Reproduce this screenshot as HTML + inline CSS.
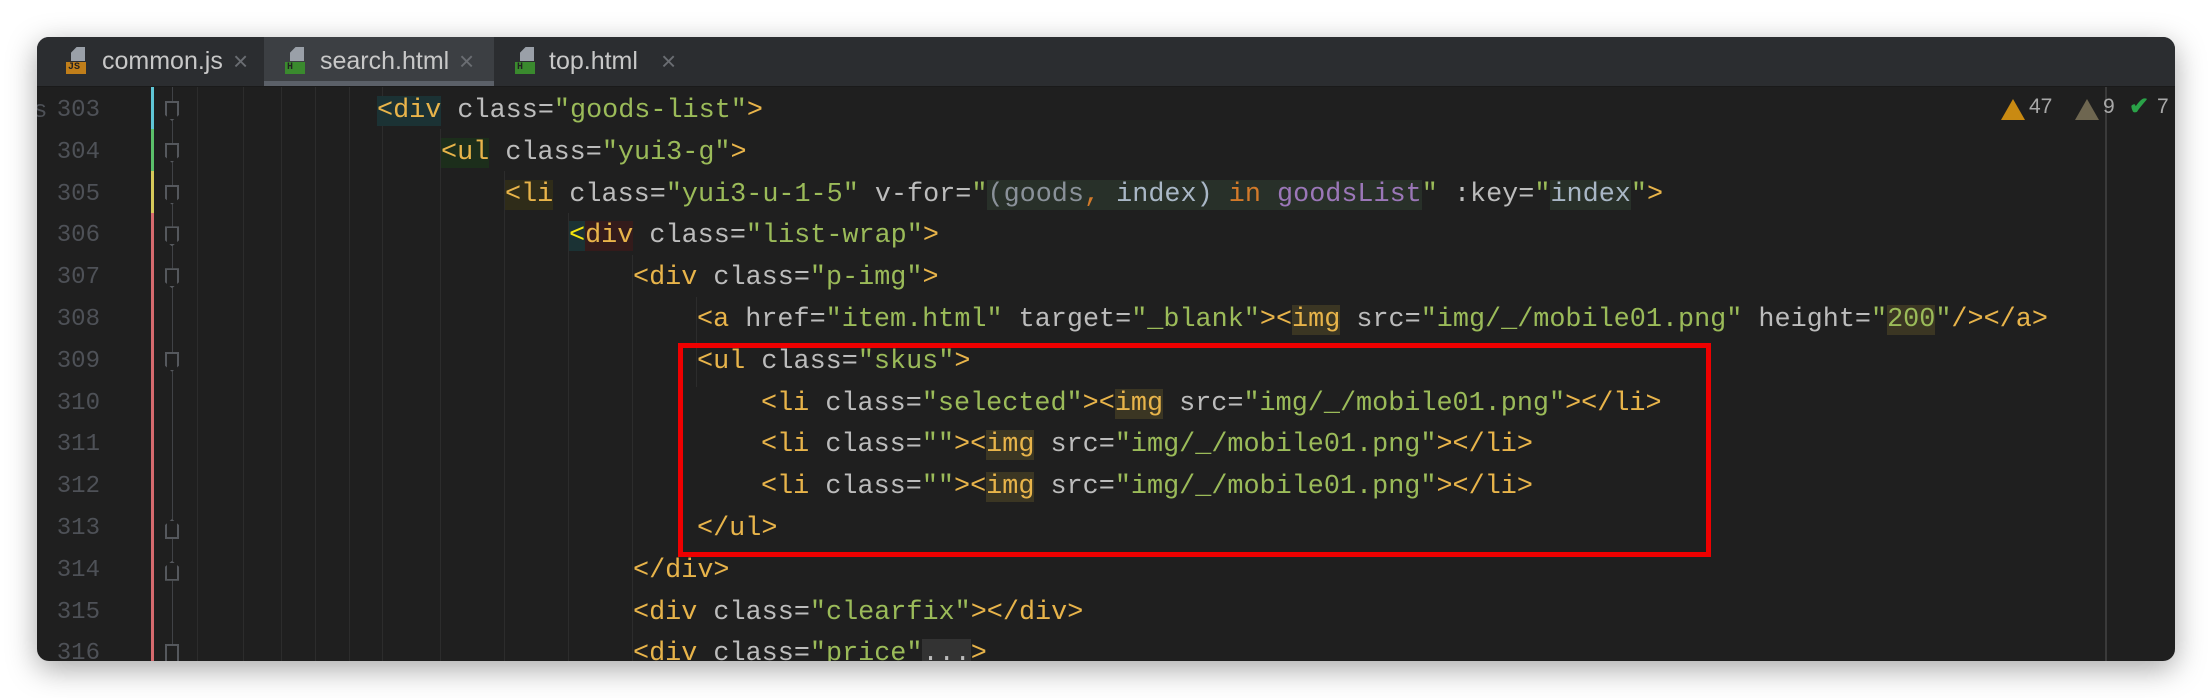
<!DOCTYPE html>
<html><head><meta charset="utf-8"><style>
body{margin:0;width:2212px;height:698px;background:#fff;overflow:hidden;position:relative;font-family:"Liberation Sans",sans-serif}
.win{position:absolute;left:37px;top:37px;width:2138px;height:624px;background:#1f1f1f;border-radius:12px;overflow:hidden;box-shadow:0 8px 30px rgba(0,0,0,.35)}
.tabs{position:absolute;left:0;top:0;right:0;height:49px;background:#2b2d30;border-bottom:1px solid #1a1a1a}
.tab{position:absolute;top:0;height:49px;color:#c8c8c8;font-size:25px;line-height:49px}
.tab.act{background:#3c3f43}
.tab.act:after{content:"";position:absolute;left:0;right:0;bottom:0;height:5px;background:#5b6068}
.ic{position:absolute;top:10px;width:20px;height:28px}
.ic .pg{position:absolute;left:5px;top:0;width:14px;height:14px;background:#9aa0a8;clip-path:polygon(40% 0,100% 0,100% 100%,0 100%,0 40%)}
.ic .bd{position:absolute;left:0;top:15px;width:20px;height:12px;font:bold 10px "Liberation Mono",monospace;color:#222;line-height:12px;padding-left:2px;box-sizing:border-box}
.x{position:absolute;top:0;color:#6a6d72;font-size:26px}
.line{position:absolute;left:0;height:42px;line-height:42px;font-family:"Liberation Mono",monospace;font-size:26.8px;white-space:pre;color:#bcbcbc}
.num{position:absolute;left:0;width:63px;text-align:right;height:42px;line-height:42px;font-family:"Liberation Mono",monospace;font-size:24px;color:#4e5157}
.t{color:#e8b44a}.s{color:#9bbb59}.a{color:#bcbcbc}.o{color:#d27a2a}.p{color:#9b77b8}.g{color:#8a9199}.v{color:#a9b7c6}
.guide{position:absolute;width:1px;background:#2c2c2c}
.fd{position:absolute;left:128px;width:14px;height:20px;border:2px solid #55585d;box-sizing:border-box;background:#1f1f1f}
</style></head><body>
<div class="win">
<div class="tabs">
 <div class="tab" style="left:0;width:226px">
  <div class="ic" style="left:29px"><div class="pg"></div><div class="bd" style="background:#c07e1a">JS</div></div>
  <span style="position:absolute;left:65px">common.js</span><span class="x" style="left:196px">×</span></div>
 <div class="tab act" style="left:227px;width:230px">
  <div class="ic" style="left:21px"><div class="pg"></div><div class="bd" style="background:#3a8a2e">H</div></div>
  <span style="position:absolute;left:56px">search.html</span><span class="x" style="left:195px">×</span></div>
 <div class="tab" style="left:458px;width:220px">
  <div class="ic" style="left:20px"><div class="pg"></div><div class="bd" style="background:#3a8a2e">H</div></div>
  <span style="position:absolute;left:54px">top.html</span><span class="x" style="left:166px">×</span></div>
</div>
<div style="position:absolute;left:114px;top:50px;width:3px;height:42px;background:#5fc6d6"></div>
<div style="position:absolute;left:114px;top:92px;width:3px;height:42px;background:#5bc06a"></div>
<div style="position:absolute;left:114px;top:134px;width:3px;height:42px;background:#d6c95a"></div>
<div style="position:absolute;left:114px;top:176px;width:3px;height:460px;background:#d66a6e"></div>
<div style="position:absolute;left:135px;top:50px;width:1px;height:580px;background:#404246"></div>
<div style="position:absolute;left:2068px;top:50px;width:2px;height:580px;background:#3a3a3a"></div>
<div class="guide" style="left:160px;top:50px;height:580px"></div>
<div class="guide" style="left:206px;top:50px;height:580px"></div>
<div class="guide" style="left:244px;top:50px;height:580px"></div>
<div class="guide" style="left:278px;top:50px;height:580px"></div>
<div class="guide" style="left:312px;top:50px;height:580px"></div>
<div class="guide" style="left:345px;top:50px;height:580px"></div>
<div class="guide" style="left:403px;top:92px;height:540px"></div>
<div class="guide" style="left:467px;top:134px;height:500px"></div>
<div class="guide" style="left:531px;top:176px;height:460px"></div>
<div class="guide" style="left:595px;top:218px;height:420px"></div>
<div class="guide" style="left:659px;top:260px;height:90px"></div>
<div style="position:absolute;left:-4px;top:54px;font:24px 'Liberation Mono',monospace;color:#4e5157;line-height:42px">s</div>
<div id="g"></div>
<div style="position:absolute;left:1964px;top:62px;width:0;height:0;border-left:12px solid transparent;border-right:12px solid transparent;border-bottom:21px solid #c98a12"></div>
<div style="position:absolute;left:1992px;top:58px;color:#a8a8a8;font-size:21px">47</div>
<div style="position:absolute;left:2038px;top:62px;width:0;height:0;border-left:12px solid transparent;border-right:12px solid transparent;border-bottom:21px solid #6e6650"></div>
<div style="position:absolute;left:2066px;top:58px;color:#a8a8a8;font-size:21px">9</div>
<div style="position:absolute;left:2092px;top:55px;color:#2aa248;font-size:24px;font-weight:bold">✔</div>
<div style="position:absolute;left:2120px;top:58px;color:#a8a8a8;font-size:21px">7</div>
<div style="position:absolute;left:641px;top:306px;width:1033px;height:214px;border:5px solid #ee0000;box-sizing:border-box"></div>
</div>
<script>
var L=[
[0,'<span style="background:#1b3234"><span class="t">&lt;div</span></span> class=<span class="s">"goods-list"</span><span class="t">&gt;</span>'],
[1,'<span style="background:#1c2e1b"><span class="t">&lt;ul</span></span> class=<span class="s">"yui3-g"</span><span class="t">&gt;</span>'],
[2,'<span style="background:#2f2c19"><span class="t">&lt;li</span></span> class=<span class="s">"yui3-u-1-5"</span> v-for=<span class="s">"</span><span style="background:#283029"><span class="g">(goods</span><span class="o">,</span> <span class="v">index)</span> <span class="o">in</span> <span class="p">goodsList</span></span><span class="s">"</span> :key=<span class="s">"</span><span style="background:#283029" class="v">index</span><span class="s">"</span><span class="t">&gt;</span>'],
[3,'<span style="background:#1b3234;color:#f5e60c">&lt;</span><span style="background:#341b1b" class="t">div</span> class=<span class="s">"list-wrap"</span><span class="t">&gt;</span>'],
[4,'<span class="t">&lt;div</span> class=<span class="s">"p-img"</span><span class="t">&gt;</span>'],
[5,'<span class="t">&lt;a</span> href=<span class="s">"item.html"</span> target=<span class="s">"_blank"</span><span class="t">&gt;&lt;<span style="background:#3b3623">img</span></span> src=<span class="s">"img/_/mobile01.png"</span> height=<span class="s">"<span style="background:#3b3623">200</span>"</span><span class="t">/&gt;&lt;/a&gt;</span>'],
[5,'<span class="t">&lt;ul</span> class=<span class="s">"skus"</span><span class="t">&gt;</span>'],
[6,'<span class="t">&lt;li</span> class=<span class="s">"selected"</span><span class="t">&gt;&lt;<span style="background:#3b3623">img</span></span> src=<span class="s">"img/_/mobile01.png"</span><span class="t">&gt;&lt;/li&gt;</span>'],
[6,'<span class="t">&lt;li</span> class=<span class="s">""</span><span class="t">&gt;&lt;<span style="background:#3b3623">img</span></span> src=<span class="s">"img/_/mobile01.png"</span><span class="t">&gt;&lt;/li&gt;</span>'],
[6,'<span class="t">&lt;li</span> class=<span class="s">""</span><span class="t">&gt;&lt;<span style="background:#3b3623">img</span></span> src=<span class="s">"img/_/mobile01.png"</span><span class="t">&gt;&lt;/li&gt;</span>'],
[5,'<span class="t">&lt;/ul&gt;</span>'],
[4,'<span class="t">&lt;/div&gt;</span>'],
[4,'<span class="t">&lt;div</span> class=<span class="s">"clearfix"</span><span class="t">&gt;&lt;/div&gt;</span>'],
[4,'<span class="t">&lt;div</span> class=<span class="s">"price"</span><span style="background:#333">...</span><span class="t">&gt;</span>']];
var h='';
for(var i=0;i<L.length;i++){var yy=53+i*41.8;
h+='<div class="num" style="top:'+yy+'px">'+(303+i)+'</div>';
h+='<div class="line" style="top:'+yy+'px;left:'+(340+L[i][0]*64)+'px">'+L[i][1]+'</div>';
if(i<5||i==6) h+='<div class="fd" style="top:'+(yy+11)+'px;clip-path:polygon(0 0,100% 0,100% 70%,50% 100%,0 70%)"></div>';
if(i==10||i==11) h+='<div class="fd" style="top:'+(yy+11)+'px;clip-path:polygon(50% 0,100% 30%,100% 100%,0 100%,0 30%)"></div>';
if(i==13) h+='<div class="fd" style="top:'+(yy+11)+'px"></div>';
}
document.getElementById('g').innerHTML=h;
</script>
</body></html>
